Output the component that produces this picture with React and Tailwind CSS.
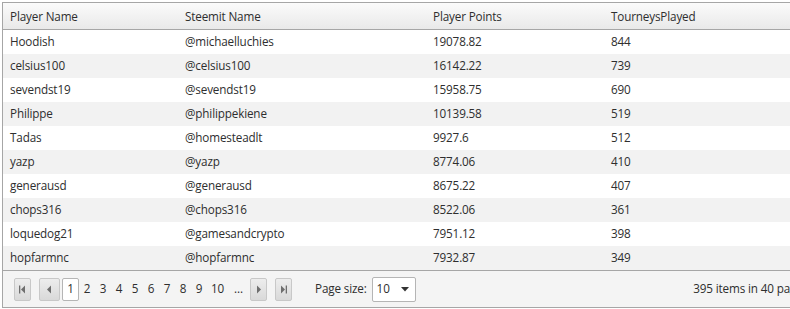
import React from "react";

const rows = [
  ["Hoodish", "@michaelluchies", "19078.82", "844"],
  ["celsius100", "@celsius100", "16142.22", "739"],
  ["sevendst19", "@sevendst19", "15958.75", "690"],
  ["Philippe", "@philippekiene", "10139.58", "519"],
  ["Tadas", "@homesteadlt", "9927.6", "512"],
  ["yazp", "@yazp", "8774.06", "410"],
  ["generausd", "@generausd", "8675.22", "407"],
  ["chops316", "@chops316", "8522.06", "361"],
  ["loquedog21", "@gamesandcrypto", "7951.12", "398"],
  ["hopfarmnc", "@hopfarmnc", "7932.87", "349"],
];

function NavBtn({ children, w = "w-[17px]" }) {
  return (
    <div className={`${w} h-[23px] flex items-center justify-center rounded-[2px] border border-[#c8c8c8] bg-gradient-to-b from-[#ededed] to-[#d9d9d9]`}>
      {children}
    </div>
  );
}

function First() {
  return (
    <svg width="9" height="9" viewBox="0 0 9 9">
      <rect x="1" y="0.5" width="1.3" height="8" fill="#6e6e6e" />
      <polygon points="7,0.5 7,8.5 3,4.5" fill="#6e6e6e" />
    </svg>
  );
}
function Prev() {
  return (
    <svg width="9" height="9" viewBox="0 0 9 9">
      <polygon points="6,0.5 6,8.5 2,4.5" fill="#6e6e6e" />
    </svg>
  );
}
function Next() {
  return (
    <svg width="9" height="9" viewBox="0 0 9 9">
      <polygon points="3,0.5 3,8.5 7,4.5" fill="#6e6e6e" />
    </svg>
  );
}
function Last() {
  return (
    <svg width="9" height="9" viewBox="0 0 9 9">
      <polygon points="2,0.5 2,8.5 6,4.5" fill="#6e6e6e" />
      <rect x="6.7" y="0.5" width="1.3" height="8" fill="#6e6e6e" />
    </svg>
  );
}

export default function App() {
  const cols = "grid grid-cols-[175px_248px_178px_1fr]";
  return (
    <div className="w-[790px] h-[309px] overflow-hidden bg-white" style={{ fontFamily: '"Open Sans", sans-serif' }}>
      <div className="w-[819px] mt-[2px] ml-[2px] border border-[#a6a6a6] text-[11.7px] tracking-[-0.15px] text-[#2e2e2e]">
        <div className={`${cols} h-[27px] items-center border-b border-[#a6a6a6] bg-gradient-to-b from-[#fbfbfb] to-[#e9e9e9]`}>
          <div className="pl-[7px] pt-[1px]">Player Name</div>
          <div className="pl-[7px] pt-[1px]">Steemit Name</div>
          <div className="pl-[7px] pt-[1px]">Player Points</div>
          <div className="pl-[7px] pt-[1px]">TourneysPlayed</div>
        </div>
        {rows.map((r, i) => (
          <div key={i} className={`${cols} h-[24px] items-center ${i % 2 ? "bg-[#f2f2f2]" : "bg-white"}`}>
            {r.map((c, j) => (
              <div key={j} className="pl-[7px]">{c}</div>
            ))}
          </div>
        ))}
        <div className="h-[37px] flex items-center border-t border-[#a6a6a6] bg-[#f4f4f4] pl-[11px] pr-[12px]">
          <div className="flex items-center gap-[8px]">
            <NavBtn><First /></NavBtn>
            <NavBtn w="w-[21px]"><Prev /></NavBtn>
          </div>
          <div className="flex items-center ml-[2px]">
            <div className="w-[17px] h-[23px] flex items-center justify-center bg-white border border-[#b5b5b5] rounded-[2px]">1</div>
            {["2", "3", "4", "5", "6", "7", "8", "9", "10", "..."].map((n) => (
              <div key={n} className={`${n.length > 1 ? "w-[21px]" : "w-[16px]"} text-center`}>{n}</div>
            ))}
          </div>
          <div className="flex items-center gap-[8px] ml-[1px]">
            <NavBtn><Next /></NavBtn>
            <NavBtn><Last /></NavBtn>
          </div>
          <div className="ml-[23px]">Page size:</div>
          <div className="ml-[5px] w-[44px] h-[25px] flex items-center justify-between pl-[4px] pr-[6px] bg-white border border-[#b5b5b5] rounded-[2px]">
            <span>10</span>
            <svg width="8" height="5" viewBox="0 0 8 5"><polygon points="0,0 8,0 4,4.5" fill="#333" /></svg>
          </div>
          <div className="ml-auto">395 items in 40 pages</div>
        </div>
      </div>
    </div>
  );
}
